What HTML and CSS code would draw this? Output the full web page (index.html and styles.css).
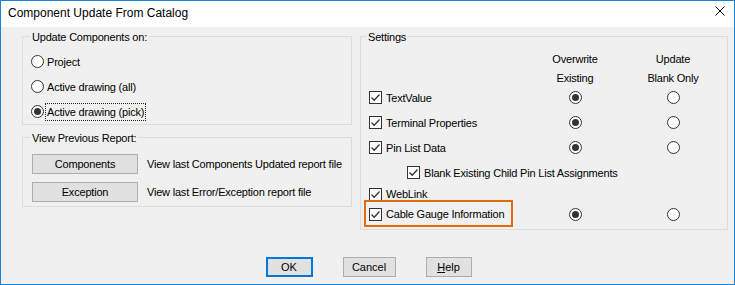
FILE: index.html
```html
<!DOCTYPE html>
<html lang="en">
<head>
  <meta charset="UTF-8">
  <title>Component Update From Catalog</title>
  <link rel="stylesheet" href="styles.css">
</head>
<body>
  <div class="window">
    <div class="titlebar">
      <span class="title">Component Update From Catalog</span>
      <svg class="close" width="10" height="10" viewBox="0 0 10 10">
        <path d="M0.5 0.5 L9.5 9.5 M9.5 0.5 L0.5 9.5" stroke="#000" stroke-width="1" fill="none"/>
      </svg>
    </div>

    <div class="content">
      <div class="left">
        <div class="group update-group">
          <div class="group-title">Update Components on:</div>
          <div class="radio-list">
            <div class="option"><span class="radio"></span><span>Project</span></div>
            <div class="option"><span class="radio"></span><span>Active drawing (all)</span></div>
            <div class="option"><span class="radio on"></span><span class="focus">Active drawing (pick)</span></div>
          </div>
        </div>

        <div class="group report-group">
          <div class="group-title">View Previous Report:</div>
          <div class="report-row">
            <button class="btn report-btn">Components</button>
            <span>View last Components Updated report file</span>
          </div>
          <div class="report-row">
            <button class="btn report-btn">Exception</button>
            <span>View last Error/Exception report file</span>
          </div>
        </div>
      </div>

      <div class="group settings">
        <div class="group-title">Settings</div>
        <div class="settings-grid">
          <div></div>
          <div class="col-head">Overwrite<br>Existing</div>
          <div class="col-head">Update<br>Blank Only</div>

          <div class="item"><span class="check"><svg width="11" height="11" viewBox="0 0 11 11"><path d="M1.5 5.5 L4.2 8.2 L9.5 2.5" stroke="#333" stroke-width="1.3" fill="none"/></svg></span><span>TextValue</span></div>
          <div class="cell"><span class="radio on"></span></div>
          <div class="cell"><span class="radio"></span></div>

          <div class="item"><span class="check"><svg width="11" height="11" viewBox="0 0 11 11"><path d="M1.5 5.5 L4.2 8.2 L9.5 2.5" stroke="#333" stroke-width="1.3" fill="none"/></svg></span><span>Terminal Properties</span></div>
          <div class="cell"><span class="radio on"></span></div>
          <div class="cell"><span class="radio"></span></div>

          <div class="item"><span class="check"><svg width="11" height="11" viewBox="0 0 11 11"><path d="M1.5 5.5 L4.2 8.2 L9.5 2.5" stroke="#333" stroke-width="1.3" fill="none"/></svg></span><span>Pin List Data</span></div>
          <div class="cell"><span class="radio on"></span></div>
          <div class="cell"><span class="radio"></span></div>

          <div class="item wide"><span class="check"><svg width="11" height="11" viewBox="0 0 11 11"><path d="M1.5 5.5 L4.2 8.2 L9.5 2.5" stroke="#333" stroke-width="1.3" fill="none"/></svg></span><span>Blank Existing Child Pin List Assignments</span></div>

          <div class="item wide-row"><span class="check"><svg width="11" height="11" viewBox="0 0 11 11"><path d="M1.5 5.5 L4.2 8.2 L9.5 2.5" stroke="#333" stroke-width="1.3" fill="none"/></svg></span><span>WebLink</span></div>

          <div class="item">
            <span class="highlight"><span class="check"><svg width="11" height="11" viewBox="0 0 11 11"><path d="M1.5 5.5 L4.2 8.2 L9.5 2.5" stroke="#333" stroke-width="1.3" fill="none"/></svg></span><span>Cable Gauge Information</span></span>
          </div>
          <div class="cell"><span class="radio on"></span></div>
          <div class="cell"><span class="radio"></span></div>
        </div>
      </div>
    </div>

    <div class="footer">
      <button class="btn ok">OK</button>
      <button class="btn cancel">Cancel</button>
      <button class="btn help"><u>H</u>elp</button>
    </div>
  </div>
</body>
</html>
```

FILE: styles.css
```css
* {
  box-sizing: border-box;
}
body {
  margin: 0;
  font-family: "Liberation Sans", Arial, sans-serif;
  font-size: 11px;
  color: #000;
  background: #fff;
}
.window {
  width: 735px;
  height: 285px;
  border: 1px solid #1883d7;
  background: #f0f0f0;
  display: flex;
  flex-direction: column;
}
.titlebar {
  height: 26px;
  flex-shrink: 0;
  background: #fff;
  display: flex;
  justify-content: space-between;
  align-items: flex-start;
  padding: 0 9px 0 7px;
}
.title {
  font-size: 12px;
  line-height: 14px;
  margin-top: 5px;
}
.close {
  margin-top: 5px;
}
.content {
  display: flex;
  gap: 8px;
  padding: 9px 0 0 21px;
}
.left {
  width: 330px;
}
.group {
  border: 1px solid #dcdcdc;
}
.group-title {
  width: fit-content;
  line-height: 14px;
  margin-top: -7px;
  padding: 0 2px;
  background: #f0f0f0;
  letter-spacing: -0.2px;
}
.update-group {
  height: 89px;
}
.update-group .group-title,
.report-group .group-title {
  margin-left: 7px;
}
.radio-list {
  margin-top: 5px;
  padding-left: 8px;
}
.option {
  height: 25px;
  display: flex;
  align-items: center;
  gap: 3px;
  letter-spacing: -0.2px;
}
.focus {
  outline: 1px dotted #222;
  outline-offset: 1px;
  line-height: 14px;
}
.radio {
  width: 13px;
  height: 13px;
  flex-shrink: 0;
  border: 1px solid #333;
  border-radius: 50%;
  background: #fff;
  display: flex;
  align-items: center;
  justify-content: center;
}
.radio.on::after {
  content: "";
  width: 7px;
  height: 7px;
  border-radius: 50%;
  background: #333;
}
.check {
  width: 13px;
  height: 13px;
  flex-shrink: 0;
  border: 1px solid #333;
  background: #fff;
  display: flex;
}
.report-group {
  height: 70px;
  margin-top: 12px;
  padding-left: 9px;
}
.report-group .group-title {
  margin-left: -2px;
}
.report-row {
  display: flex;
  align-items: center;
  gap: 9px;
  margin-top: 9px;
  letter-spacing: -0.2px;
}
.report-row + .report-row {
  margin-top: 8px;
}
.btn {
  height: 20px;
  padding: 0;
  border: 1px solid #adadad;
  background: #e1e1e1;
  font-family: inherit;
  font-size: 11px;
  color: #000;
}
.report-btn {
  width: 106px;
  letter-spacing: -0.2px;
}
.settings {
  width: 368px;
  height: 194px;
}
.settings .group-title {
  margin-left: 5px;
}
.settings-grid {
  display: grid;
  grid-template-columns: 157px 98px 98px;
  grid-template-rows: 35px 25px 25px 25px 25px 18px 22px;
  margin-top: 6px;
  padding-left: 8px;
  letter-spacing: -0.2px;
}
.col-head {
  text-align: center;
  line-height: 19px;
  align-self: start;
}
.cell {
  display: flex;
  align-items: center;
  justify-content: center;
}
.item {
  display: flex;
  align-items: center;
  gap: 4px;
  white-space: nowrap;
}
.wide,
.wide-row {
  grid-column: 1 / -1;
}
.wide {
  padding-left: 38px;
}
.highlight {
  display: inline-flex;
  align-items: center;
  gap: 4px;
  padding: 6px 7px 4px 3px;
  margin: -6px -7px -4px -3px;
  outline: 2px solid #e36c0a;
}
.footer {
  display: flex;
  justify-content: center;
  gap: 30px;
  margin-top: 27px;
  padding-left: 2px;
}
.ok {
  width: 47px;
  border: 2px solid #0078d7;
}
.cancel {
  width: 53px;
}
.help {
  width: 46px;
}
```
